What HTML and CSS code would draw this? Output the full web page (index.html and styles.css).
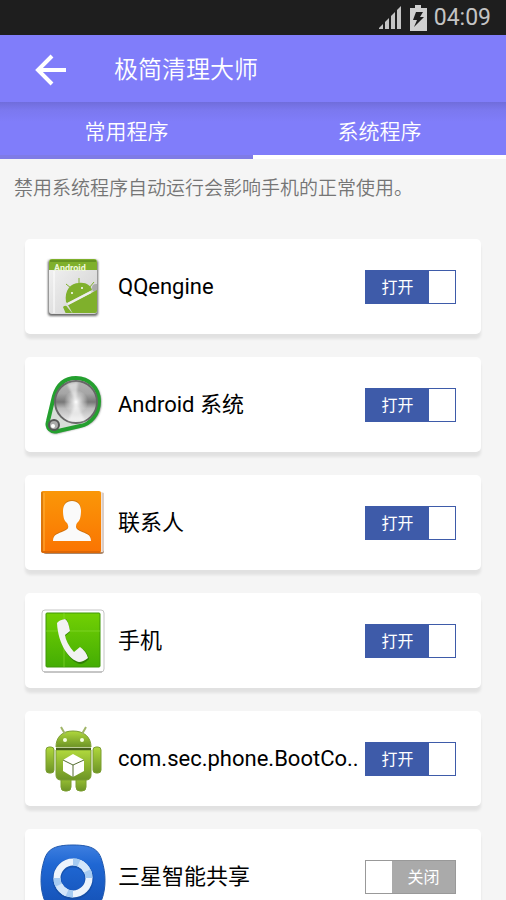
FILE: index.html
```html
<!DOCTYPE html>
<html lang="zh-CN">
<head>
  <meta charset="utf-8">
  <meta name="viewport" content="width=device-width, initial-scale=1">
  <title>极简清理大师</title>
  <link rel="stylesheet" href="styles.css">
</head>
<body>
  <div class="status-bar">
    <svg class="signal" viewBox="0 0 24 24" width="24" height="24">
      <path fill="#c4c4c4" d="M1 23V22L5 18V23ZM7 23V16L11 12V23ZM13 23V10L17 6V23ZM19 23V4L23 0V23Z"/>
    </svg>
    <svg class="battery" viewBox="0 0 18 26" width="18" height="26">
      <path fill="#d0d0d0" d="M6 0H12V3H18V26H1V3H6Z"/>
      <path fill="#1e1e1e" d="M7 7H14L11 12H15L5 22L8 15H4Z"/>
    </svg>
    <span class="clock">04:09</span>
  </div>

  <header class="app-bar">
    <button class="back" type="button" aria-label="返回">
      <svg viewBox="0 0 32 32" width="32" height="32">
        <path fill="none" stroke="#fff" stroke-width="4" d="M17 2L3 16L17 30M3 16H31"/>
      </svg>
    </button>
    <h1>极简清理大师</h1>
  </header>

  <nav class="tabs">
    <a class="tab" href="#common">常用程序</a>
    <a class="tab active" href="#system">系统程序</a>
  </nav>

  <main id="system">
    <p class="notice">禁用系统程序自动运行会影响手机的正常使用。</p>

    <ul class="app-list">
      <li class="card">
        <svg class="icon" viewBox="0 0 66 66">
          <defs>
            <linearGradient id="pageFill" x1="0" y1="0" x2="1" y2="1">
              <stop offset="0" stop-color="#f4f4f4"/>
              <stop offset="1" stop-color="#cfcfcf"/>
            </linearGradient>
            <clipPath id="pageClip"><rect x="9" y="5" width="48" height="54" rx="2"/></clipPath>
            <filter id="soft" x="-20%" y="-20%" width="140%" height="140%"><feGaussianBlur stdDeviation="1"/></filter>
          </defs>
          <rect x="8" y="6" width="50" height="56" rx="3" fill="#666" filter="url(#soft)"/>
          <rect x="9" y="5" width="48" height="55" rx="3" fill="url(#pageFill)"/>
          <path d="M9 16V8a3 3 0 0 1 3-3H54a3 3 0 0 1 3 3V16Z" fill="#7fb02c"/>
          <path d="M10 7H56" stroke="#659321" stroke-width="2"/>
          <path d="M14 17V59" stroke="#fff"/>
          <text class="icon-text" x="14" y="17">Android</text>
          <g clip-path="url(#pageClip)">
            <circle cx="56" cy="34" r="4" fill="#aaa"/>
            <g fill="#7fb02c">
              <path d="M26 48C24 36 31 29 39 29C46 28 51 32 52 36L27 49Z"/>
              <path d="M28 51L57 36V60H33Z"/>
              <path d="M23 53Q26 50 28 54L33 60H26Z"/>
            </g>
            <path d="M31 34L26 30M39 30V24M49 34L54 28" fill="none" stroke="#7fb02c" stroke-width="1"/>
            <path d="M28 50L51 38" stroke="#eee" stroke-width="2"/>
            <circle cx="32" cy="39" r="1" fill="#fff"/>
            <circle cx="42" cy="34" r="1" fill="#fff"/>
          </g>
        </svg>
        <span class="name" id="app-1">QQengine</span>
        <label class="switch">
          <input type="checkbox" aria-labelledby="app-1" checked>
          <span class="on">打开</span><span class="off">关闭</span>
        </label>
      </li>

      <li class="card">
        <svg class="icon" viewBox="0 0 66 66">
          <defs>
            <linearGradient id="steel" x1="0" y1="0" x2="0" y2="1">
              <stop offset="0" stop-color="#b5b5b5"/>
              <stop offset=".3" stop-color="#a5a5a5"/>
              <stop offset=".5" stop-color="#777"/>
              <stop offset=".65" stop-color="#bbb"/>
              <stop offset="1" stop-color="#eee"/>
            </linearGradient>
            <radialGradient id="shine">
              <stop offset="0" stop-color="#fff"/>
              <stop offset="1" stop-color="#fff" stop-opacity="0"/>
            </radialGradient>
          </defs>
          <path d="M8 51L14 24C18 11 26 6 36 6C50 6 61 16 61 30C61 44 52 53 41 55L18 61C11 63 6 57 8 51Z" fill="#555" filter="url(#soft)"/>
          <path d="M8 49L14 24C18 11 26 6 36 6C49 6 59 16 59 29C59 42 51 52 40 54L18 59C11 61 6 56 8 49Z" fill="#d8ded8" stroke="#24a02f" stroke-width="4"/>
          <circle cx="36" cy="30" r="21" fill="url(#steel)" stroke="#666" stroke-width="2"/>
          <path d="M36 30L27 12L38 10ZM36 30L28 49L45 49Z" fill="#fff" opacity=".5" filter="url(#soft)"/>
          <circle cx="36" cy="30" r="12" fill="url(#shine)"/>
          <circle cx="14" cy="53" r="5" fill="#aaa" stroke="#555" stroke-width="2"/>
          <circle cx="13" cy="54" r="2" fill="#fff"/>
        </svg>
        <span class="name" id="app-2">Android 系统</span>
        <label class="switch">
          <input type="checkbox" aria-labelledby="app-2" checked>
          <span class="on">打开</span><span class="off">关闭</span>
        </label>
      </li>

      <li class="card">
        <svg class="icon" viewBox="0 0 66 66">
          <defs>
            <linearGradient id="orange" x1="0" y1="0" x2="0" y2="1">
              <stop offset="0" stop-color="#fa9708"/>
              <stop offset="1" stop-color="#fa7402"/>
            </linearGradient>
          </defs>
          <rect x="3" y="3" width="61" height="61" rx="3" fill="#a9876b"/>
          <rect x="4" y="2" width="60" height="60" rx="2" fill="#eee2dc"/>
          <path d="M60 3V61M63 3V61" stroke="#c9b9b0"/>
          <rect x="1" y="1" width="60" height="62" rx="2" fill="url(#orange)"/>
          <path d="M2 2V62" stroke="#bd6812" stroke-width="1"/>
          <path d="M4 3V61" stroke="#ffb33d" stroke-width="1"/>
          <path d="M2 62H60" stroke="#c25c0b" stroke-width="1"/>
          <path d="M13 50C13 43 18 43 24 40C29 38 29 36 27 32C24 30 23 25 23 20C23 14 26 10 32 10C38 10 41 14 41 20C41 25 40 30 37 32C35 36 36 38 40 40C46 43 51 43 51 50Z" fill="#a76114" opacity=".5"/>
          <path d="M13 51C13 44 18 44 24 41C29 39 29 37 27 33C24 31 23 26 23 21C23 15 26 11 32 11C38 11 41 15 41 21C41 26 40 31 37 33C35 37 36 39 40 41C46 44 51 44 51 51Z" fill="#fafafa"/>
        </svg>
        <span class="name" id="app-3">联系人</span>
        <label class="switch">
          <input type="checkbox" aria-labelledby="app-3" checked>
          <span class="on">打开</span><span class="off">关闭</span>
        </label>
      </li>

      <li class="card">
        <svg class="icon" viewBox="0 0 66 66">
          <defs>
            <linearGradient id="green" x1="0" y1="0" x2="0" y2="1">
              <stop offset="0" stop-color="#72d003"/>
              <stop offset="1" stop-color="#44ad04"/>
            </linearGradient>
          </defs>
          <rect x="2" y="2" width="62" height="62" rx="3" fill="#fff" stroke="#c4c4c4"/>
          <path d="M4 64H62" stroke="#aaa" stroke-width="1"/>
          <rect x="6" y="5" width="54" height="54" rx="1" fill="url(#green)" stroke="#3f9708"/>
          <path d="M6 23H60M24 5V59" stroke="#8bdb39" stroke-width="1" opacity=".6"/>
          <path d="M18 16Q20 12 26 11Q28 12 30 24L25 28Q25 36 34 45L41 40Q47 43 49 51Q44 56 40 56C30 54 19 38 18 16Z" fill="#286b08" opacity=".7"/>
          <path d="M17 15Q19 12 25 11Q28 12 30 23L25 27Q26 35 34 44L40 39Q46 43 48 50Q43 54 39 54C29 52 18 36 17 15Z" fill="#f2f2f2"/>
        </svg>
        <span class="name" id="app-4">手机</span>
        <label class="switch">
          <input type="checkbox" aria-labelledby="app-4" checked>
          <span class="on">打开</span><span class="off">关闭</span>
        </label>
      </li>

      <li class="card">
        <svg class="icon" viewBox="0 0 66 66">
          <defs>
            <linearGradient id="droid" x1="0" y1="0" x2="0" y2="1">
              <stop offset="0" stop-color="#b0d83c"/>
              <stop offset="1" stop-color="#6d9426"/>
            </linearGradient>
          </defs>
          <g fill="url(#droid)" stroke="#7b9d31" stroke-width="1">
            <rect x="21" y="46" width="10" height="19" rx="4"/>
            <rect x="36" y="46" width="10" height="19" rx="4"/>
            <rect x="6" y="21" width="8" height="26" rx="3"/>
            <rect x="53" y="21" width="8" height="26" rx="3"/>
            <path d="M16 24H51V49Q51 54 46 54H21Q16 54 16 49Z"/>
            <path d="M16 21C16 11 22 5 33 5C44 5 51 11 51 21Z"/>
          </g>
          <path d="M16 23H51" stroke="#465f1b" stroke-width="2"/>
          <path d="M25 8L21 1M42 8L46 1" stroke="#a0b568" stroke-width="2"/>
          <circle cx="25" cy="14" r="2" fill="#f5ffe0"/>
          <circle cx="42" cy="14" r="2" fill="#f5ffe0"/>
          <path d="M33 28L44 34V45L33 51L23 45V34Z" fill="#fff"/>
          <path d="M23 34L33 39L44 34M33 39V51" fill="none" stroke="#566e32" stroke-width="1"/>
        </svg>
        <span class="name" id="app-5">com.sec.phone.BootCo..</span>
        <label class="switch">
          <input type="checkbox" aria-labelledby="app-5" checked>
          <span class="on">打开</span><span class="off">关闭</span>
        </label>
      </li>

      <li class="card">
        <svg class="icon" viewBox="0 0 66 66">
          <defs>
            <linearGradient id="blue" x1="0" y1="0" x2="0" y2="1">
              <stop offset="0" stop-color="#3e7fe0"/>
              <stop offset=".3" stop-color="#1f67d3"/>
              <stop offset="1" stop-color="#1450b4"/>
            </linearGradient>
          </defs>
          <path d="M33 1C53 1 59 6 62 17C66 29 66 44 62 55C58 64 50 66 33 66C16 66 8 64 4 55C0 44 0 29 4 17C7 6 13 1 33 1Z" fill="url(#blue)" stroke="#2058ad" stroke-width="1"/>
          <circle cx="33" cy="35" r="16" fill="none" stroke="#124592" stroke-width="9" opacity=".5"/>
          <circle cx="33" cy="34" r="16" fill="none" stroke="#edf4fc" stroke-width="7"/>
          <path d="M33 18A16 16 0 0 1 49 34M33 50A16 16 0 0 1 17 34" fill="none" stroke="#a5cbf2" stroke-width="7"/>
          <path d="M39 19A16 16 0 0 1 47 27M27 49A16 16 0 0 1 19 41" fill="none" stroke="#d3e6fa" stroke-width="7"/>
        </svg>
        <span class="name" id="app-6">三星智能共享</span>
        <label class="switch">
          <input type="checkbox" aria-labelledby="app-6">
          <span class="on">打开</span><span class="off">关闭</span>
        </label>
      </li>
    </ul>
  </main>
</body>
</html>
```
FILE: styles.css
```css
* {
  box-sizing: border-box;
}
body {
  margin: 0;
  height: 100vh;
  display: flex;
  flex-direction: column;
  overflow: hidden;
  background-color: #f5f5f5;
  color: #000;
  font-family: Roboto, "Noto Sans CJK SC", sans-serif;
}
svg {
  display: block;
}

.status-bar {
  flex: none;
  display: flex;
  justify-content: flex-end;
  align-items: center;
  gap: 7px;
  height: 35px;
  padding-right: 15px;
  background-color: #1e1e1e;
  color: #c4c4c4;
}
.clock {
  font-size: 23px;
  line-height: 35px;
}

.app-bar {
  flex: none;
  display: flex;
  align-items: center;
  gap: 47px;
  height: 67px;
  padding: 2px 35px 0;
  background-color: #807dfa;
  color: #fff;
}
.back {
  padding: 0;
  border: none;
  background: none;
  cursor: pointer;
}
h1 {
  margin: 0;
  font-size: 24px;
  line-height: 36px;
  font-weight: 350;
}

.tabs {
  flex: none;
  display: flex;
  height: 57px;
  background: linear-gradient(#706ddb, #7b78ef 8px, #807dfa 20px);
}
.tab {
  flex: 1;
  padding-top: 2px;
  border-bottom: 4px solid #7f7be6;
  color: #fff;
  font-size: 21px;
  font-weight: 350;
  line-height: 57px;
  text-align: center;
  text-decoration: none;
}
.tab.active {
  border-bottom-color: #fff;
}

main {
  flex: 1;
  min-height: 0;
  overflow-y: auto;
  scrollbar-width: none;
}
.notice {
  margin: 0;
  padding: 16px 14px 0;
  color: #757575;
  font-size: 19px;
  font-weight: 350;
  line-height: 28px;
}

.app-list {
  display: grid;
  gap: 23px;
  margin: 0;
  padding: 36px 25px 23px;
  list-style: none;
}
.card {
  display: flex;
  align-items: center;
  height: 95px;
  padding: 0 25px 0 15px;
  border-radius: 5px;
  background-color: #fff;
  box-shadow: 0 5px 3px rgba(0, 0, 0, 0.08);
}
.icon {
  flex: none;
  width: 66px;
  height: 66px;
}
.icon-text {
  fill: #eff8dc;
  font-size: 9px;
  font-weight: bold;
}
.name {
  flex: 1;
  min-width: 0;
  margin-left: 12px;
  overflow: hidden;
  font-size: 22px;
  line-height: 32px;
  white-space: nowrap;
}

.switch {
  flex: none;
  display: flex;
  width: 91px;
  height: 34px;
  border: 1px solid #999;
  background-color: #fff;
  color: #fff;
  font-size: 16px;
  line-height: 34px;
  text-align: center;
  cursor: pointer;
}
.switch input {
  appearance: none;
  order: 1;
  width: 26px;
  height: 32px;
  margin: 0;
  background-color: #fff;
}
.switch span {
  order: 2;
  flex: 1;
}
.switch .on {
  order: 0;
  display: none;
  background-color: #3e5ba9;
}
.switch .off {
  background-color: #aaa;
}
.switch:has(input:checked) {
  border-color: #3e5ba9;
}
.switch input:checked ~ .on {
  display: block;
}
.switch input:checked ~ .off {
  display: none;
}
```
